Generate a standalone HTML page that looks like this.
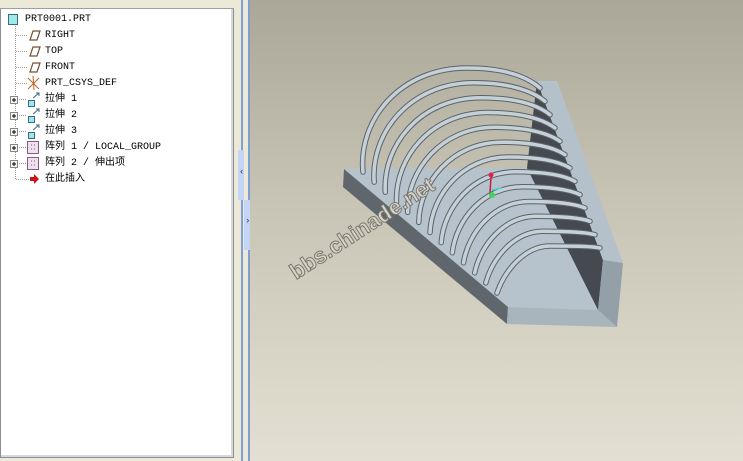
<!DOCTYPE html>
<html><head><meta charset="utf-8"><style>
*{margin:0;padding:0}
body{width:743px;height:461px;overflow:hidden;position:relative;background:#ece9d8;font-family:"Liberation Mono","Noto Sans CJK SC",monospace;}
#top{position:absolute;left:0;top:0;width:234px;height:8px;background:#ece9d8;border-bottom:1px solid #a0a0a0}
#tree{position:absolute;left:0;top:9px;width:232px;height:448px;background:#fff;border:1px solid #8a9098;border-top:none;box-shadow:inset -2px -2px 0 #d8d8d8}
.r{position:absolute;font-size:10px;line-height:14px;color:#000;white-space:pre;font-family:"Liberation Mono","Noto Sans CJK SC",monospace}
#strip{position:absolute;left:235px;top:0;width:15px;height:461px;background:#ece9d8}
#vp{position:absolute;left:250px;top:0;width:493px;height:461px;background:linear-gradient(#aba798,#c9c5b6 45%,#e3dfd2)}
</style></head><body>
<div id="top"></div>
<div id="tree">
<svg width="232" height="200" style="position:absolute;left:0;top:-9px">
<g stroke="#999" stroke-dasharray="1,1" fill="none">
<line x1="14.5" y1="26" x2="14.5" y2="180"/>
<line x1="15" y1="35.5" x2="26" y2="35.5"/><line x1="15" y1="51.5" x2="26" y2="51.5"/><line x1="15" y1="67.5" x2="26" y2="67.5"/><line x1="15" y1="83.5" x2="26" y2="83.5"/>
<line x1="18" y1="99.5" x2="26" y2="99.5"/><line x1="18" y1="115.5" x2="26" y2="115.5"/><line x1="18" y1="131.5" x2="26" y2="131.5"/><line x1="18" y1="147.5" x2="26" y2="147.5"/><line x1="18" y1="163.5" x2="26" y2="163.5"/><line x1="15" y1="179.5" x2="28" y2="179.5"/>
</g>
<g>
<rect x="7.5" y="14.5" width="9" height="10" fill="#9ee8ec" stroke="#3a6a80"/>
<g fill="none" stroke="#7a5030" stroke-width="1.2"><path d="M29 40 L32 31 L39 31 L36 40Z"/><path d="M29 56 L32 47 L39 47 L36 56Z"/><path d="M29 72 L32 63 L39 63 L36 72Z"/></g>
<g stroke="#c06020"><line x1="27" y1="78" x2="38" y2="89"/><line x1="38" y1="78" x2="27" y2="89"/><line x1="32" y1="76" x2="33" y2="90"/></g>
</g>
<g id="ex">
<rect x="9.5" y="96.5" width="7" height="7" fill="#f4f4f0" stroke="#888"/><line x1="11" y1="100" x2="15" y2="100" stroke="#000"/><line x1="13" y1="98" x2="13" y2="102" stroke="#000"/>
</g>
<use href="#ex" y="16"/><use href="#ex" y="32"/><use href="#ex" y="48"/><use href="#ex" y="64"/>
<g id="ext"><rect x="27.5" y="100.5" width="6" height="6" fill="#9ee8ec" stroke="#3a6a80"/><path d="M32 98 L38 93 M35 93 L38 93 L38 96" stroke="#3a6a80" fill="none"/></g>
<use href="#ext" y="16"/><use href="#ext" y="32"/>
<g id="pat"><rect x="26.5" y="141.5" width="11" height="12" fill="#f0e0f0" stroke="#806080"/><path d="M30 145h1M33 145h1M30 149h1M33 149h1" stroke="#806080"/></g>
<use href="#pat" y="16"/>
<path d="M29 177 h4 v-3 l5 5 l-5 5 v-3 h-4z" fill="#d01010"/>
</svg>
<div class="r" style="left:24px;top:4px">PRT0001.PRT</div>
<div class="r" style="left:44px;top:20px">RIGHT</div>
<div class="r" style="left:44px;top:36px">TOP</div>
<div class="r" style="left:44px;top:52px">FRONT</div>
<div class="r" style="left:44px;top:68px">PRT_CSYS_DEF</div>
<div class="r" style="left:44px;top:84px">拉伸 1</div>
<div class="r" style="left:44px;top:100px">拉伸 2</div>
<div class="r" style="left:44px;top:116px">拉伸 3</div>
<div class="r" style="left:44px;top:132px">阵列 1 / LOCAL_GROUP</div>
<div class="r" style="left:44px;top:148px">阵列 2 / 伸出项</div>
<div class="r" style="left:44px;top:164px">在此插入</div>
</div>
<div id="strip">
<div style="position:absolute;left:6px;top:0;width:2px;height:461px;background:#7f9fd0"></div>
<div style="position:absolute;left:13px;top:0;width:2px;height:461px;background:#7f9fd0"></div>
<div style="position:absolute;left:3px;top:150px;width:6px;height:50px;background:#c4d4f4"></div>
<div style="position:absolute;left:9px;top:200px;width:6px;height:50px;background:#c4d4f4"></div>
<div style="position:absolute;left:4px;top:167px;font-size:9px;color:#334">‹</div>
<div style="position:absolute;left:10px;top:216px;font-size:9px;color:#334">›</div>
</div>
<div id="vp"></div>
<svg width="743" height="461" style="position:absolute;left:0;top:0">
<polygon points="344,169 527,168 598,310 508,307" fill="#b7c3cc"/>
<polygon points="344,169 508,307 507,324 343,187" fill="#5f676d"/>
<polygon points="508,307 598,310 617,327 507,324" fill="#a9b5bd"/>
<polygon points="537,81 603,260 598,310 527,168" fill="#454a50"/>
<polygon points="537,81 557,81 623,263 603,260" fill="#b4c1ca"/>
<polygon points="603,260 623,263 617,327 598,310" fill="#93a0a8"/>
<g fill="none" stroke-linecap="round" id="arcs"></g>
<text x="0" y="0" transform="translate(296,280) rotate(-33)" font-family="Liberation Sans,sans-serif" font-weight="bold" font-size="22" fill="#d8d4c8" stroke="#7c7870" stroke-width="1">bbs.chinade.net</text>
<line x1="491" y1="176" x2="490" y2="194" stroke="#c02040" stroke-width="1.5"/>
<circle cx="491" cy="175" r="2.5" fill="#e0204a"/>
<line x1="492" y1="190" x2="502" y2="188" stroke="#40d0d0" stroke-width="1.5"/>
<circle cx="492" cy="195" r="3" fill="#40d060"/>
</svg>
<script>
var g=document.getElementById('arcs'),h='';
var A=[363,172,358,120,400,68,467,68,500,68,525,75,540,88];
var B=[497,293,505,270,525,246,550,246,570,246,590,246,600,248];
for(var i=12;i>=0;i--){var t=i/12,p=[];
for(var k=0;k<14;k++)p.push((A[k]+(B[k]-A[k])*t).toFixed(1));
var d='M'+p[0]+' '+p[1]+' C'+p[2]+' '+p[3]+' '+p[4]+' '+p[5]+' '+p[6]+' '+p[7]+' C'+p[8]+' '+p[9]+' '+p[10]+' '+p[11]+' '+p[12]+' '+p[13];
h+='<path d="'+d+'" stroke="#5c646a" stroke-width="5.5"/><path d="'+d+'" stroke="#c6d0d7" stroke-width="3.5"/>';}
g.innerHTML=h;
</script>
</body></html>
